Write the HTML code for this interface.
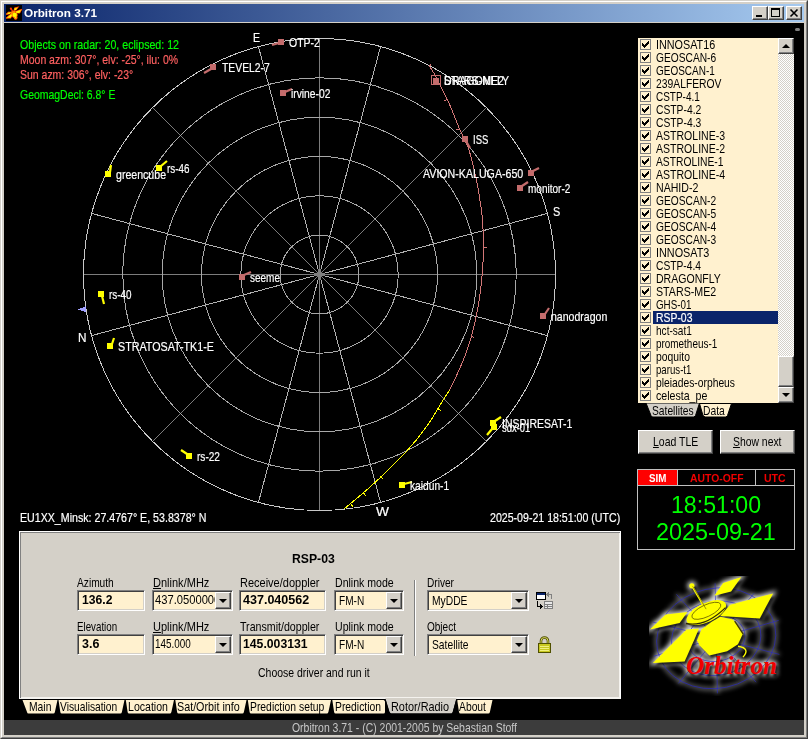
<!DOCTYPE html>
<html lang="en"><head><meta charset="utf-8"><title>Orbitron 3.71</title>
<style>
html,body{margin:0;padding:0}
body{width:808px;height:739px;overflow:hidden;background:#d4d0c8;font-family:"Liberation Sans",sans-serif;position:relative}
.abs,.t,svg.radar,svg.ic{position:absolute}
.t{white-space:nowrap;transform-origin:0 0;font-weight:400}
.t.b{font-weight:700}
.t.k{-webkit-text-stroke:0.2px}
.t u{text-decoration:underline;text-underline-offset:1px}
#win{left:0;top:0;width:808px;height:739px;box-sizing:border-box;border:1px solid;border-color:#d4d0c8 #404040 #404040 #d4d0c8}
#win2{left:1px;top:1px;width:806px;height:737px;box-sizing:border-box;border:1px solid;border-color:#fff #808080 #808080 #fff}
#title{left:4px;top:4px;width:800px;height:18px;background:linear-gradient(90deg,#0a246a 0%,#a6caf0 100%)}
#client{left:4px;top:23px;width:800px;height:697px;background:#000}
#status{left:4px;top:720px;width:800px;height:15px;background:#3c3c3c}
.btn{box-sizing:border-box;background:#d4d0c8;border:1px solid;border-color:#fff #404040 #404040 #fff;box-shadow:inset -1px -1px 0 #808080,inset 1px 1px 0 #d4d0c8}
.sunk{box-sizing:border-box;background:#fff1cf;border:1px solid;border-color:#808080 #fff #fff #808080;box-shadow:inset 1px 1px 0 #404040,inset -1px -1px 0 #d4d0c8}
#panel{left:19px;top:531px;width:602px;height:168px;box-sizing:border-box;background:#d4d0c8;border:1px solid;border-color:#fff #fff #f4f2ee #fff;box-shadow:inset 1px 1px 0 #808080,inset -1px -1px 0 #f4f2ee}
#list{left:638px;top:38px;width:156px;height:365px;background:#fff1cf}
.cb{width:11px;height:11px;box-sizing:border-box;border:1px solid #808080;background:#fff1cf}
.track{background-image:conic-gradient(#fff 25%,#d4d0c8 0 50%,#fff 0 75%,#d4d0c8 0);background-size:2px 2px}
.arr{width:0;height:0;border-left:4px solid transparent;border-right:4px solid transparent}
</style></head><body>
<div class="abs" id="win"></div><div class="abs" id="win2"></div>
<div class="abs" id="title"></div>
<div class="abs" id="client"></div>
<div class="abs" id="status"></div>
<svg class="radar" width="808" height="739" viewBox="0 0 808 739" shape-rendering="crispEdges">
<line x1="91.5" y1="213.4" x2="547.5" y2="335.6" stroke="#b2b2b2"/>
<line x1="258.4" y1="46.5" x2="380.6" y2="502.5" stroke="#b2b2b2"/>
<line x1="380.6" y1="46.5" x2="258.4" y2="502.5" stroke="#b2b2b2"/>
<line x1="547.5" y1="213.4" x2="91.5" y2="335.6" stroke="#b2b2b2"/>
<line x1="83.5" y1="274.5" x2="555.5" y2="274.5" stroke="#7c7c7c"/>
<line x1="152.6" y1="107.6" x2="486.4" y2="441.4" stroke="#7c7c7c"/>
<line x1="319.5" y1="38.5" x2="319.5" y2="510.5" stroke="#7c7c7c"/>
<line x1="486.4" y1="107.6" x2="152.6" y2="441.4" stroke="#7c7c7c"/>
<circle cx="319.5" cy="274.5" r="39.3" fill="none" stroke="#a8a8a8"/>
<circle cx="319.5" cy="274.5" r="78.7" fill="none" stroke="#a8a8a8"/>
<circle cx="319.5" cy="274.5" r="118.0" fill="none" stroke="#a8a8a8"/>
<circle cx="319.5" cy="274.5" r="157.3" fill="none" stroke="#a8a8a8"/>
<circle cx="319.5" cy="274.5" r="196.7" fill="none" stroke="#a8a8a8"/>
<circle cx="319.5" cy="274.5" r="236.0" fill="none" stroke="#c8c8c8"/>
<rect x="314" y="273" width="11" height="3" fill="#808080"/><rect x="318" y="269" width="3" height="11" fill="#808080"/>
<path d="M429.1,65.7 C430.1,67.3 433.3,71.9 435.2,75.2 C437.1,78.5 438.3,81.3 440.3,85.4 C442.3,89.5 445.2,94.9 447.4,99.6 C449.6,104.3 451.5,108.9 453.5,113.8 C455.5,118.7 457.9,125.1 459.6,129 C461.3,132.9 462.1,133.6 463.6,137 C465.1,140.4 467.1,144.4 468.7,149.2 C470.3,153.9 471.7,159.8 473.1,165.5 C474.5,171.2 476.0,177.6 477.2,183.7 C478.4,189.8 479.4,196.6 480.2,202 C481.0,207.4 481.7,211.1 482.2,216.2 C482.7,221.3 483.0,227.2 483.2,232.4 C483.4,237.6 483.5,242.3 483.5,247.3 C483.5,252.3 483.2,257.7 483,262.2 C482.8,266.7 482.7,268.9 482.2,274.3 C481.7,279.7 480.9,288.1 480,294.6 C479.1,301.1 478.2,306.5 476.8,313.5 C475.4,320.5 473.4,329.3 471.4,336.5 C469.4,343.7 467.1,350.3 464.6,356.8 C462.1,363.3 459.0,370.2 456.5,375.7 C454.0,381.2 450.7,387.6 449.5,390" fill="none" stroke="#d27676"/>
<path d="M449.5,390 C448.4,391.8 446.4,394.9 442.6,401 C438.8,407.1 432.7,418.1 426.5,426.7 C420.3,435.3 413.7,443.6 405.6,452.4 C397.5,461.2 385.3,472.8 378,479.7 C370.7,486.6 367.6,489.2 362,494 C356.4,498.8 347.4,506.2 344.5,508.7" fill="none" stroke="#ffff00"/>
<line x1="429.5" y1="65.5" x2="431.5" y2="64.5" stroke="#d27676"/>
<line x1="447.4" y1="99.6" x2="444.4" y2="100.6" stroke="#d27676"/>
<line x1="459.6" y1="129" x2="456.6" y2="130" stroke="#d27676"/>
<line x1="483.5" y1="247.3" x2="486.5" y2="247.3" stroke="#d27676"/>
<line x1="471.4" y1="336.5" x2="474.4" y2="337.5" stroke="#d27676"/>
<line x1="437.8" y1="409" x2="440.8" y2="410.5" stroke="#ffff00"/>
<line x1="379.9" y1="476.5" x2="382.9" y2="478.5" stroke="#ffff00"/>
<line x1="363.8" y1="493.3" x2="365.8" y2="496.3" stroke="#ffff00"/>
<line x1="351" y1="503.9" x2="353" y2="506.9" stroke="#ffff00"/>
<rect x="278" y="39" width="6" height="6" fill="#c46c6c"/><line x1="279" y1="43" x2="272" y2="45" stroke="#c46c6c" stroke-width="2.2" shape-rendering="geometricPrecision"/>
<rect x="210" y="64" width="6" height="6" fill="#c46c6c"/><line x1="211" y1="69" x2="204" y2="73" stroke="#c46c6c" stroke-width="2.2" shape-rendering="geometricPrecision"/>
<rect x="280" y="90" width="6" height="6" fill="#c46c6c"/><line x1="285" y1="92" x2="292" y2="89" stroke="#c46c6c" stroke-width="2.2" shape-rendering="geometricPrecision"/>
<rect x="105" y="171" width="6" height="6" fill="#ffff00"/><line x1="110" y1="172" x2="111" y2="165" stroke="#ffff00" stroke-width="2.2" shape-rendering="geometricPrecision"/>
<rect x="156" y="165" width="6" height="6" fill="#ffff00"/><line x1="161" y1="166" x2="167" y2="161" stroke="#ffff00" stroke-width="2.2" shape-rendering="geometricPrecision"/>
<rect x="98" y="291" width="6" height="6" fill="#ffff00"/><line x1="102" y1="296" x2="104" y2="304" stroke="#ffff00" stroke-width="2.2" shape-rendering="geometricPrecision"/>
<rect x="107" y="343" width="6" height="6" fill="#ffff00"/><line x1="112" y1="344" x2="114" y2="338" stroke="#ffff00" stroke-width="2.2" shape-rendering="geometricPrecision"/>
<rect x="239" y="274" width="6" height="6" fill="#c46c6c"/><line x1="244" y1="275" x2="251" y2="272" stroke="#c46c6c" stroke-width="2.2" shape-rendering="geometricPrecision"/>
<rect x="462" y="136" width="6" height="6" fill="#c46c6c"/><line x1="466" y1="141" x2="470" y2="148" stroke="#c46c6c" stroke-width="2.2" shape-rendering="geometricPrecision"/>
<rect x="528" y="170" width="6" height="6" fill="#c46c6c"/><line x1="533" y1="171" x2="539" y2="168" stroke="#c46c6c" stroke-width="2.2" shape-rendering="geometricPrecision"/>
<rect x="517" y="185" width="6" height="6" fill="#c46c6c"/><line x1="522" y1="186" x2="528" y2="182" stroke="#c46c6c" stroke-width="2.2" shape-rendering="geometricPrecision"/>
<rect x="540" y="313" width="6" height="6" fill="#c46c6c"/><line x1="545" y1="314" x2="549" y2="308" stroke="#c46c6c" stroke-width="2.2" shape-rendering="geometricPrecision"/>
<rect x="490" y="420" width="6" height="6" fill="#ffff00"/><line x1="495" y1="421" x2="501" y2="417" stroke="#ffff00" stroke-width="2.2" shape-rendering="geometricPrecision"/>
<rect x="491" y="424" width="6" height="6" fill="#ffff00"/><line x1="492" y1="429" x2="487" y2="435" stroke="#ffff00" stroke-width="2.2" shape-rendering="geometricPrecision"/>
<rect x="399" y="482" width="6" height="6" fill="#ffff00"/><line x1="404" y1="484" x2="412" y2="482" stroke="#ffff00" stroke-width="2.2" shape-rendering="geometricPrecision"/>
<rect x="186" y="453" width="6" height="6" fill="#ffff00"/><line x1="187" y1="454" x2="181" y2="450" stroke="#ffff00" stroke-width="2.2" shape-rendering="geometricPrecision"/>
<rect x="431.5" y="75.5" width="9" height="9" fill="none" stroke="#c46c6c"/><rect x="433" y="78" width="6" height="6" fill="#c46c6c"/>
<path d="M78,309.5 L86,306 L86,312 Z" fill="#a0a0ff"/>
</svg>
<div class="abs" style="left:6px;top:5px;width:16px;height:16px;background:#000"></div>
<svg class="ic" style="left:6px;top:5px" width="16" height="16" viewBox="0 -0.6 16 16"><defs><filter id="ib"><feGaussianBlur stdDeviation="0.45"/></filter></defs><g filter="url(#ib)"><g fill="#ff3000" stroke="#ff3000" stroke-width="1.3"><polygon points="8.7,2.6 11.7,1.8 9.8,4.2 8.4,4.4"/><polygon points="9.8,6.1 15.3,4.1 13.6,7.2 10.6,7"/><polygon points="0.3,8.6 2.5,6.7 4.6,6.8 3.3,8.1"/><polygon points="0.5,12.4 4.6,8.9 5.9,9.1 4.6,12.2"/><circle cx="8.7" cy="9.4" r="2.3"/><circle cx="9.6" cy="12.2" r="1.3"/><ellipse cx="6.9" cy="6.9" rx="2.2" ry="1.1" transform="rotate(-25 6.9 6.9)"/><path d="M4.9,3 L6.8,5.8" fill="none" stroke-width="1.4"/><circle cx="4.9" cy="3" r="0.5"/></g></g><g filter="url(#ib)"><g fill="#ff9000" stroke="#ff9000" stroke-width="0.5"><polygon points="8.7,2.6 11.7,1.8 9.8,4.2 8.4,4.4"/><polygon points="9.8,6.1 15.3,4.1 13.6,7.2 10.6,7"/><polygon points="0.3,8.6 2.5,6.7 4.6,6.8 3.3,8.1"/><polygon points="0.5,12.4 4.6,8.9 5.9,9.1 4.6,12.2"/><circle cx="8.7" cy="9.4" r="2.3"/><circle cx="9.6" cy="12.2" r="1.3"/><ellipse cx="6.9" cy="6.9" rx="2.2" ry="1.1" transform="rotate(-25 6.9 6.9)"/></g></g><g fill="#ffff00" transform="translate(0.6,0.6) scale(0.93)"><polygon points="8.7,2.6 11.7,1.8 9.8,4.2 8.4,4.4"/><polygon points="9.8,6.1 15.3,4.1 13.6,7.2 10.6,7"/><polygon points="0.3,8.6 2.5,6.7 4.6,6.8 3.3,8.1"/><polygon points="0.5,12.4 4.6,8.9 5.9,9.1 4.6,12.2"/><circle cx="8.7" cy="9.4" r="2.3"/><circle cx="9.6" cy="12.2" r="0.7"/></g></svg>
<span class="t b" style="left:24.20px;top:8.3px;font-size:11.5px;line-height:11.5px;color:#fff;transform:scaleX(1.021)">Orbitron 3.71</span>
<div class="abs btn" style="left:752px;top:6px;width:16px;height:14px"></div>
<div class="abs btn" style="left:768px;top:6px;width:16px;height:14px"></div>
<div class="abs btn" style="left:786px;top:6px;width:16px;height:14px"></div>
<div class="abs" style="left:756px;top:15px;width:6px;height:2px;background:#000"></div>
<div class="abs" style="left:771px;top:8px;width:9px;height:9px;box-sizing:border-box;border:1px solid #000;border-top-width:2px"></div>
<svg class="ic" style="left:786px;top:6px" width="16" height="14" viewBox="0 0 16 14"><path d="M4.5,3.5 L11.5,10.5 M11.5,3.5 L4.5,10.5" stroke="#000" stroke-width="1.6" fill="none"/></svg>
<div class="abs" style="left:795px;top:28px;width:5px;height:3px;background:#808080;border-radius:1.5px"></div>
<span class="t k" style="left:19.80px;top:38.0px;font-size:13px;line-height:13px;color:#00ff00;transform:scaleX(0.818)">Objects on radar: 20, eclipsed: 12</span>
<span class="t k" style="left:19.80px;top:53.0px;font-size:13px;line-height:13px;color:#ff6060;transform:scaleX(0.806)">Moon azm: 307°, elv: -25°, ilu: 0%</span>
<span class="t k" style="left:19.80px;top:68.0px;font-size:13px;line-height:13px;color:#ff6060;transform:scaleX(0.806)">Sun azm: 306°, elv: -23°</span>
<span class="t k" style="left:19.80px;top:88.0px;font-size:13px;line-height:13px;color:#00ff00;transform:scaleX(0.804)">GeomagDecl: 6.8° E</span>
<span class="t k" style="left:252.90px;top:31.0px;font-size:13px;line-height:13px;color:#fff;transform:scaleX(0.816)">E</span>
<span class="t k" style="left:77.80px;top:330.5px;font-size:13px;line-height:13px;color:#fff;transform:scaleX(0.904)">N</span>
<span class="t k" style="left:553.00px;top:205.0px;font-size:13px;line-height:13px;color:#fff;transform:scaleX(0.839)">S</span>
<span class="t k" style="left:376.40px;top:505.0px;font-size:13px;line-height:13px;color:#fff;transform:scaleX(1.057)">W</span>
<span class="t k" style="left:288.70px;top:36.0px;font-size:13px;line-height:13px;color:#fff;transform:scaleX(0.807)">OTP-2</span>
<span class="t k" style="left:221.50px;top:61.0px;font-size:13px;line-height:13px;color:#fff;transform:scaleX(0.797)">TEVEL2-7</span>
<span class="t k" style="left:290.60px;top:87.0px;font-size:13px;line-height:13px;color:#fff;transform:scaleX(0.790)">irvine-02</span>
<span class="t k" style="left:116.00px;top:168.0px;font-size:13px;line-height:13px;color:#fff;transform:scaleX(0.814)">greencube</span>
<span class="t k" style="left:167.00px;top:162.0px;font-size:13px;line-height:13px;color:#fff;transform:scaleX(0.760)">rs-46</span>
<span class="t k" style="left:109.00px;top:288.0px;font-size:13px;line-height:13px;color:#fff;transform:scaleX(0.760)">rs-40</span>
<span class="t k" style="left:118.40px;top:340.0px;font-size:13px;line-height:13px;color:#fff;transform:scaleX(0.825)">STRATOSAT-TK1-E</span>
<span class="t k" style="left:250.00px;top:271.0px;font-size:13px;line-height:13px;color:#fff;transform:scaleX(0.769)">seeme</span>
<span class="t k" style="left:444.00px;top:74.0px;font-size:13px;line-height:13px;color:#fff;transform:scaleX(0.814)">DRAGONFLY</span>
<span class="t k" style="left:444.00px;top:74.0px;font-size:13px;line-height:13px;color:#fff;transform:scaleX(0.817)">STARS-ME2</span>
<span class="t k" style="left:473.00px;top:133.0px;font-size:13px;line-height:13px;color:#fff;transform:scaleX(0.733)">ISS</span>
<span class="t k" style="left:423.30px;top:167.0px;font-size:13px;line-height:13px;color:#fff;transform:scaleX(0.818)">AVION-KALUGA-650</span>
<span class="t k" style="left:528.00px;top:182.0px;font-size:13px;line-height:13px;color:#fff;transform:scaleX(0.770)">monitor-2</span>
<span class="t k" style="left:550.70px;top:310.0px;font-size:13px;line-height:13px;color:#fff;transform:scaleX(0.811)">nanodragon</span>
<span class="t k" style="left:501.50px;top:417.0px;font-size:13px;line-height:13px;color:#fff;transform:scaleX(0.808)">INSPIRESAT-1</span>
<span class="t k" style="left:502.40px;top:421.0px;font-size:13px;line-height:13px;color:#fff;transform:scaleX(0.723)">sdx-01</span>
<span class="t k" style="left:410.00px;top:479.0px;font-size:13px;line-height:13px;color:#fff;transform:scaleX(0.786)">kaidun-1</span>
<span class="t k" style="left:196.80px;top:450.0px;font-size:13px;line-height:13px;color:#fff;transform:scaleX(0.774)">rs-22</span>
<span class="t k" style="left:19.50px;top:511.0px;font-size:13px;line-height:13px;color:#fff;transform:scaleX(0.818)">EU1XX_Minsk: 27.4767° E, 53.8378° N</span>
<span class="t k" style="left:489.60px;top:511.0px;font-size:13px;line-height:13px;color:#fff;transform:scaleX(0.815)">2025-09-21 18:51:00 (UTC)</span>
<div class="abs" id="panel"></div>
<span class="t b" style="left:291.70px;top:552.0px;font-size:13px;line-height:13px;color:#000;transform:scaleX(0.938)">RSP-03</span>
<span class="t" style="left:77.40px;top:576.0px;font-size:13px;line-height:13px;color:#000;transform:scaleX(0.783)">Azimuth</span>
<div class="abs sunk" style="left:77px;top:590px;width:68px;height:21px"></div>
<span class="t b" style="left:81.60px;top:593.0px;font-size:13px;line-height:13px;color:#000;transform:scaleX(0.935)">136.2</span>
<span class="t" style="left:152.50px;top:576.0px;font-size:13px;line-height:13px;color:#000;transform:scaleX(0.848)"><u>D</u>nlink/MHz</span>
<div class="abs sunk" style="left:152px;top:590px;width:81px;height:21px"></div>
<div class="abs btn" style="left:215px;top:592px;width:16px;height:17px"></div>
<div class="abs arr" style="left:219px;top:599px;border-top:4px solid #000"></div>
<span class="t" style="left:239.90px;top:576.0px;font-size:13px;line-height:13px;color:#000;transform:scaleX(0.846)">Receive/doppler</span>
<div class="abs sunk" style="left:239px;top:590px;width:87px;height:21px"></div>
<span class="t b" style="left:243.00px;top:593.0px;font-size:13px;line-height:13px;color:#000;transform:scaleX(0.964)">437.040562</span>
<span class="t" style="left:335.30px;top:576.0px;font-size:13px;line-height:13px;color:#000;transform:scaleX(0.813)">Dnlink mode</span>
<div class="abs sunk" style="left:334px;top:590px;width:70px;height:21px"></div>
<div class="abs btn" style="left:386px;top:592px;width:16px;height:17px"></div>
<div class="abs arr" style="left:390px;top:599px;border-top:4px solid #000"></div>
<span class="t" style="left:339.30px;top:593.5px;font-size:13px;line-height:13px;color:#000;transform:scaleX(0.775)">FM-N</span>
<span class="t" style="left:427.00px;top:576.0px;font-size:13px;line-height:13px;color:#000;transform:scaleX(0.778)">Driver</span>
<div class="abs sunk" style="left:427px;top:590px;width:102px;height:21px"></div>
<div class="abs btn" style="left:511px;top:592px;width:16px;height:17px"></div>
<div class="abs arr" style="left:515px;top:599px;border-top:4px solid #000"></div>
<span class="t" style="left:431.50px;top:593.5px;font-size:13px;line-height:13px;color:#000;transform:scaleX(0.792)">MyDDE</span>
<span class="t" style="left:77.40px;top:620.0px;font-size:13px;line-height:13px;color:#000;transform:scaleX(0.750)">Elevation</span>
<div class="abs sunk" style="left:77px;top:634px;width:68px;height:21px"></div>
<span class="t b" style="left:81.60px;top:637.0px;font-size:13px;line-height:13px;color:#000;transform:scaleX(0.961)">3.6</span>
<span class="t" style="left:152.50px;top:620.0px;font-size:13px;line-height:13px;color:#000;transform:scaleX(0.848)"><u>U</u>plink/MHz</span>
<div class="abs sunk" style="left:152px;top:634px;width:81px;height:21px"></div>
<div class="abs btn" style="left:215px;top:636px;width:16px;height:17px"></div>
<div class="abs arr" style="left:219px;top:643px;border-top:4px solid #000"></div>
<span class="t" style="left:155.20px;top:637.0px;font-size:13px;line-height:13px;color:#000;transform:scaleX(0.762)">145.000</span>
<span class="t" style="left:239.90px;top:620.0px;font-size:13px;line-height:13px;color:#000;transform:scaleX(0.818)">Transmit/doppler</span>
<div class="abs sunk" style="left:239px;top:634px;width:87px;height:21px"></div>
<span class="t b" style="left:243.00px;top:637.0px;font-size:13px;line-height:13px;color:#000;transform:scaleX(0.940)">145.003131</span>
<span class="t" style="left:335.30px;top:620.0px;font-size:13px;line-height:13px;color:#000;transform:scaleX(0.813)">Uplink mode</span>
<div class="abs sunk" style="left:334px;top:634px;width:70px;height:21px"></div>
<div class="abs btn" style="left:386px;top:636px;width:16px;height:17px"></div>
<div class="abs arr" style="left:390px;top:643px;border-top:4px solid #000"></div>
<span class="t" style="left:339.30px;top:637.5px;font-size:13px;line-height:13px;color:#000;transform:scaleX(0.775)">FM-N</span>
<span class="t" style="left:427.00px;top:620.0px;font-size:13px;line-height:13px;color:#000;transform:scaleX(0.771)">Object</span>
<div class="abs sunk" style="left:427px;top:634px;width:102px;height:21px"></div>
<div class="abs btn" style="left:511px;top:636px;width:16px;height:17px"></div>
<div class="abs arr" style="left:515px;top:643px;border-top:4px solid #000"></div>
<span class="t" style="left:431.50px;top:637.5px;font-size:13px;line-height:13px;color:#000;transform:scaleX(0.790)">Satellite</span>
<div class="abs" style="left:154px;top:592px;width:61px;height:17px;overflow:hidden">
<span class="t" style="left:1.20px;top:1.0px;font-size:13px;line-height:13px;color:#000;transform:scaleX(0.860)">437.0500000</span>
</div>
<span class="t" style="left:257.50px;top:666.0px;font-size:13px;line-height:13px;color:#000;transform:scaleX(0.805)">Choose driver and run it</span>
<div class="abs" style="left:414px;top:580px;width:1px;height:76px;background:#808080"></div><div class="abs" style="left:415px;top:580px;width:1px;height:76px;background:#fff"></div>
<svg class="ic" style="left:535px;top:591px" width="18" height="18" viewBox="0 0 18 18" shape-rendering="crispEdges">
<rect x="1.5" y="1.5" width="9" height="7" fill="#fff" stroke="#000"/><rect x="2" y="2" width="8" height="2" fill="#0a246a"/>
<path d="M2.5,10 V15.5 H6" fill="none" stroke="#000"/><path d="M5,13 L8,15.5 L5,18 Z" fill="#000"/>
<path d="M16.5,8 V3.5 H13" fill="none" stroke="#808080"/><path d="M14,1 L11,3.5 L14,6 Z" fill="#808080"/>
<rect x="9.5" y="10.5" width="8" height="7" fill="#e8e8e8" stroke="#808080"/><path d="M9.5,13.5 H17.5 M9.5,15.5 H17.5 M12.5,12.5 V17.5" stroke="#808080" fill="none"/>
</svg>
<svg class="ic" style="left:537px;top:636px" width="15" height="17" viewBox="0 0 15 17">
<path d="M4,8 V5 A3.5,3.5 0 0 1 11,5 V8" fill="none" stroke="#505000" stroke-width="2.6"/>
<path d="M4,8 V5 A3.5,3.5 0 0 1 11,5 V8" fill="none" stroke="#d8d860" stroke-width="1"/>
<rect x="1.5" y="7.5" width="12" height="9" fill="#c8c820" stroke="#505000"/>
<path d="M3,10.5 H12 M3,12.5 H12 M3,14.5 H12" stroke="#f0f080" fill="none"/>
</svg>
<svg class="ic" style="left:0;top:696px" width="808" height="20" viewBox="0 696 808 20">
<path d="M22.5,700 L57.5,700 L54.9,712 Q54.6,713.5 53.3,713.5 L28.5,713.5 Q27.2,713.5 27.0,712 Z" fill="#fff1cf"/>
<path d="M58.5,700 L124.5,700 L121.9,712 Q121.6,713.5 120.3,713.5 L61.8,713.5 Q60.5,713.5 60.3,712 Z" fill="#fff1cf"/>
<path d="M125.8,700 L174,700 L171.4,712 Q171.1,713.5 169.8,713.5 L129.1,713.5 Q127.8,713.5 127.6,712 Z" fill="#fff1cf"/>
<path d="M175.3,700 L246.5,700 L243.9,712 Q243.6,713.5 242.3,713.5 L178.60000000000002,713.5 Q177.3,713.5 177.10000000000002,712 Z" fill="#fff1cf"/>
<path d="M247.8,700 L331,700 L328.4,712 Q328.1,713.5 326.8,713.5 L251.10000000000002,713.5 Q249.8,713.5 249.60000000000002,712 Z" fill="#fff1cf"/>
<path d="M332.3,700 L383.5,700 Q385,700 385,701.5 L385,712 Q385,713.5 383.5,713.5 L335.6,713.5 Q334.3,713.5 334.1,712 Z" fill="#fff1cf"/>
<path d="M457.2,700 L492.5,700 L489.9,712 Q489.6,713.5 488.3,713.5 L460.5,713.5 Q459.2,713.5 459.0,712 Z" fill="#fff1cf"/>
<path d="M385.3,698 L456.5,698 L452.8,712 L451.5,713.5 L390.8,713.5 L389.40000000000003,712 Z" fill="#d4d0c8"/>
<path d="M385.0,699.5 L389.0,712.5 L390.3,714 L452,714 L453.2,712.5 L456.8,699.5" fill="none" stroke="#000" stroke-width="1.2"/>
</svg>
<span class="t" style="left:28.70px;top:700.0px;font-size:13px;line-height:13px;color:#000;transform:scaleX(0.794)">Main</span>
<span class="t" style="left:60.30px;top:700.0px;font-size:13px;line-height:13px;color:#000;transform:scaleX(0.787)">Visualisation</span>
<span class="t" style="left:128.00px;top:700.0px;font-size:13px;line-height:13px;color:#000;transform:scaleX(0.813)">Location</span>
<span class="t" style="left:177.20px;top:700.0px;font-size:13px;line-height:13px;color:#000;transform:scaleX(0.827)">Sat/Orbit info</span>
<span class="t" style="left:250.20px;top:700.0px;font-size:13px;line-height:13px;color:#000;transform:scaleX(0.797)">Prediction setup</span>
<span class="t" style="left:335.00px;top:700.0px;font-size:13px;line-height:13px;color:#000;transform:scaleX(0.796)">Prediction</span>
<span class="t" style="left:390.80px;top:700.0px;font-size:13px;line-height:13px;color:#000;transform:scaleX(0.837)">Rotor/Radio</span>
<span class="t" style="left:459.00px;top:700.0px;font-size:13px;line-height:13px;color:#000;transform:scaleX(0.794)">About</span>
<span class="t" style="left:291.80px;top:721.0px;font-size:13px;line-height:13px;color:#c8c8c8;transform:scaleX(0.803)">Orbitron 3.71 - (C) 2001-2005 by Sebastian Stoff</span>
<div class="abs" id="list"></div>
<div class="abs" style="left:653px;top:311px;width:125px;height:13px;background:#0a246a"></div>
<div class="abs cb" style="left:640px;top:39px"></div><svg class="ic" style="left:640px;top:39px" width="11" height="11" viewBox="0 0 11 11"><path d="M2,4h1v3h-1zM3,5h1v3h-1zM4,6h1v3h-1zM5,5h1v3h-1zM6,4h1v3h-1zM7,3h1v3h-1zM8,2h1v3h-1z" fill="#000" shape-rendering="crispEdges"/></svg>
<span class="t" style="left:656.00px;top:38.0px;font-size:13px;line-height:13px;color:#000;transform:scaleX(0.830)">INNOSAT16</span>
<div class="abs cb" style="left:640px;top:52px"></div><svg class="ic" style="left:640px;top:52px" width="11" height="11" viewBox="0 0 11 11"><path d="M2,4h1v3h-1zM3,5h1v3h-1zM4,6h1v3h-1zM5,5h1v3h-1zM6,4h1v3h-1zM7,3h1v3h-1zM8,2h1v3h-1z" fill="#000" shape-rendering="crispEdges"/></svg>
<span class="t" style="left:656.00px;top:51.0px;font-size:13px;line-height:13px;color:#000;transform:scaleX(0.786)">GEOSCAN-6</span>
<div class="abs cb" style="left:640px;top:65px"></div><svg class="ic" style="left:640px;top:65px" width="11" height="11" viewBox="0 0 11 11"><path d="M2,4h1v3h-1zM3,5h1v3h-1zM4,6h1v3h-1zM5,5h1v3h-1zM6,4h1v3h-1zM7,3h1v3h-1zM8,2h1v3h-1z" fill="#000" shape-rendering="crispEdges"/></svg>
<span class="t" style="left:656.00px;top:64.0px;font-size:13px;line-height:13px;color:#000;transform:scaleX(0.768)">GEOSCAN-1</span>
<div class="abs cb" style="left:640px;top:78px"></div><svg class="ic" style="left:640px;top:78px" width="11" height="11" viewBox="0 0 11 11"><path d="M2,4h1v3h-1zM3,5h1v3h-1zM4,6h1v3h-1zM5,5h1v3h-1zM6,4h1v3h-1zM7,3h1v3h-1zM8,2h1v3h-1z" fill="#000" shape-rendering="crispEdges"/></svg>
<span class="t" style="left:656.00px;top:77.0px;font-size:13px;line-height:13px;color:#000;transform:scaleX(0.795)">239ALFEROV</span>
<div class="abs cb" style="left:640px;top:91px"></div><svg class="ic" style="left:640px;top:91px" width="11" height="11" viewBox="0 0 11 11"><path d="M2,4h1v3h-1zM3,5h1v3h-1zM4,6h1v3h-1zM5,5h1v3h-1zM6,4h1v3h-1zM7,3h1v3h-1zM8,2h1v3h-1z" fill="#000" shape-rendering="crispEdges"/></svg>
<span class="t" style="left:656.00px;top:90.0px;font-size:13px;line-height:13px;color:#000;transform:scaleX(0.767)">CSTP-4.1</span>
<div class="abs cb" style="left:640px;top:104px"></div><svg class="ic" style="left:640px;top:104px" width="11" height="11" viewBox="0 0 11 11"><path d="M2,4h1v3h-1zM3,5h1v3h-1zM4,6h1v3h-1zM5,5h1v3h-1zM6,4h1v3h-1zM7,3h1v3h-1zM8,2h1v3h-1z" fill="#000" shape-rendering="crispEdges"/></svg>
<span class="t" style="left:656.00px;top:103.0px;font-size:13px;line-height:13px;color:#000;transform:scaleX(0.793)">CSTP-4.2</span>
<div class="abs cb" style="left:640px;top:117px"></div><svg class="ic" style="left:640px;top:117px" width="11" height="11" viewBox="0 0 11 11"><path d="M2,4h1v3h-1zM3,5h1v3h-1zM4,6h1v3h-1zM5,5h1v3h-1zM6,4h1v3h-1zM7,3h1v3h-1zM8,2h1v3h-1z" fill="#000" shape-rendering="crispEdges"/></svg>
<span class="t" style="left:656.00px;top:116.0px;font-size:13px;line-height:13px;color:#000;transform:scaleX(0.793)">CSTP-4.3</span>
<div class="abs cb" style="left:640px;top:130px"></div><svg class="ic" style="left:640px;top:130px" width="11" height="11" viewBox="0 0 11 11"><path d="M2,4h1v3h-1zM3,5h1v3h-1zM4,6h1v3h-1zM5,5h1v3h-1zM6,4h1v3h-1zM7,3h1v3h-1zM8,2h1v3h-1z" fill="#000" shape-rendering="crispEdges"/></svg>
<span class="t" style="left:656.00px;top:129.0px;font-size:13px;line-height:13px;color:#000;transform:scaleX(0.811)">ASTROLINE-3</span>
<div class="abs cb" style="left:640px;top:143px"></div><svg class="ic" style="left:640px;top:143px" width="11" height="11" viewBox="0 0 11 11"><path d="M2,4h1v3h-1zM3,5h1v3h-1zM4,6h1v3h-1zM5,5h1v3h-1zM6,4h1v3h-1zM7,3h1v3h-1zM8,2h1v3h-1z" fill="#000" shape-rendering="crispEdges"/></svg>
<span class="t" style="left:656.00px;top:142.0px;font-size:13px;line-height:13px;color:#000;transform:scaleX(0.811)">ASTROLINE-2</span>
<div class="abs cb" style="left:640px;top:156px"></div><svg class="ic" style="left:640px;top:156px" width="11" height="11" viewBox="0 0 11 11"><path d="M2,4h1v3h-1zM3,5h1v3h-1zM4,6h1v3h-1zM5,5h1v3h-1zM6,4h1v3h-1zM7,3h1v3h-1zM8,2h1v3h-1z" fill="#000" shape-rendering="crispEdges"/></svg>
<span class="t" style="left:656.00px;top:155.0px;font-size:13px;line-height:13px;color:#000;transform:scaleX(0.792)">ASTROLINE-1</span>
<div class="abs cb" style="left:640px;top:169px"></div><svg class="ic" style="left:640px;top:169px" width="11" height="11" viewBox="0 0 11 11"><path d="M2,4h1v3h-1zM3,5h1v3h-1zM4,6h1v3h-1zM5,5h1v3h-1zM6,4h1v3h-1zM7,3h1v3h-1zM8,2h1v3h-1z" fill="#000" shape-rendering="crispEdges"/></svg>
<span class="t" style="left:656.00px;top:168.0px;font-size:13px;line-height:13px;color:#000;transform:scaleX(0.811)">ASTROLINE-4</span>
<div class="abs cb" style="left:640px;top:182px"></div><svg class="ic" style="left:640px;top:182px" width="11" height="11" viewBox="0 0 11 11"><path d="M2,4h1v3h-1zM3,5h1v3h-1zM4,6h1v3h-1zM5,5h1v3h-1zM6,4h1v3h-1zM7,3h1v3h-1zM8,2h1v3h-1z" fill="#000" shape-rendering="crispEdges"/></svg>
<span class="t" style="left:656.00px;top:181.0px;font-size:13px;line-height:13px;color:#000;transform:scaleX(0.815)">NAHID-2</span>
<div class="abs cb" style="left:640px;top:195px"></div><svg class="ic" style="left:640px;top:195px" width="11" height="11" viewBox="0 0 11 11"><path d="M2,4h1v3h-1zM3,5h1v3h-1zM4,6h1v3h-1zM5,5h1v3h-1zM6,4h1v3h-1zM7,3h1v3h-1zM8,2h1v3h-1z" fill="#000" shape-rendering="crispEdges"/></svg>
<span class="t" style="left:656.00px;top:194.0px;font-size:13px;line-height:13px;color:#000;transform:scaleX(0.786)">GEOSCAN-2</span>
<div class="abs cb" style="left:640px;top:208px"></div><svg class="ic" style="left:640px;top:208px" width="11" height="11" viewBox="0 0 11 11"><path d="M2,4h1v3h-1zM3,5h1v3h-1zM4,6h1v3h-1zM5,5h1v3h-1zM6,4h1v3h-1zM7,3h1v3h-1zM8,2h1v3h-1z" fill="#000" shape-rendering="crispEdges"/></svg>
<span class="t" style="left:656.00px;top:207.0px;font-size:13px;line-height:13px;color:#000;transform:scaleX(0.786)">GEOSCAN-5</span>
<div class="abs cb" style="left:640px;top:221px"></div><svg class="ic" style="left:640px;top:221px" width="11" height="11" viewBox="0 0 11 11"><path d="M2,4h1v3h-1zM3,5h1v3h-1zM4,6h1v3h-1zM5,5h1v3h-1zM6,4h1v3h-1zM7,3h1v3h-1zM8,2h1v3h-1z" fill="#000" shape-rendering="crispEdges"/></svg>
<span class="t" style="left:656.00px;top:220.0px;font-size:13px;line-height:13px;color:#000;transform:scaleX(0.786)">GEOSCAN-4</span>
<div class="abs cb" style="left:640px;top:234px"></div><svg class="ic" style="left:640px;top:234px" width="11" height="11" viewBox="0 0 11 11"><path d="M2,4h1v3h-1zM3,5h1v3h-1zM4,6h1v3h-1zM5,5h1v3h-1zM6,4h1v3h-1zM7,3h1v3h-1zM8,2h1v3h-1z" fill="#000" shape-rendering="crispEdges"/></svg>
<span class="t" style="left:656.00px;top:233.0px;font-size:13px;line-height:13px;color:#000;transform:scaleX(0.786)">GEOSCAN-3</span>
<div class="abs cb" style="left:640px;top:247px"></div><svg class="ic" style="left:640px;top:247px" width="11" height="11" viewBox="0 0 11 11"><path d="M2,4h1v3h-1zM3,5h1v3h-1zM4,6h1v3h-1zM5,5h1v3h-1zM6,4h1v3h-1zM7,3h1v3h-1zM8,2h1v3h-1z" fill="#000" shape-rendering="crispEdges"/></svg>
<span class="t" style="left:656.00px;top:246.0px;font-size:13px;line-height:13px;color:#000;transform:scaleX(0.833)">INNOSAT3</span>
<div class="abs cb" style="left:640px;top:260px"></div><svg class="ic" style="left:640px;top:260px" width="11" height="11" viewBox="0 0 11 11"><path d="M2,4h1v3h-1zM3,5h1v3h-1zM4,6h1v3h-1zM5,5h1v3h-1zM6,4h1v3h-1zM7,3h1v3h-1zM8,2h1v3h-1z" fill="#000" shape-rendering="crispEdges"/></svg>
<span class="t" style="left:656.00px;top:259.0px;font-size:13px;line-height:13px;color:#000;transform:scaleX(0.788)">CSTP-4.4</span>
<div class="abs cb" style="left:640px;top:273px"></div><svg class="ic" style="left:640px;top:273px" width="11" height="11" viewBox="0 0 11 11"><path d="M2,4h1v3h-1zM3,5h1v3h-1zM4,6h1v3h-1zM5,5h1v3h-1zM6,4h1v3h-1zM7,3h1v3h-1zM8,2h1v3h-1z" fill="#000" shape-rendering="crispEdges"/></svg>
<span class="t" style="left:656.00px;top:272.0px;font-size:13px;line-height:13px;color:#000;transform:scaleX(0.811)">DRAGONFLY</span>
<div class="abs cb" style="left:640px;top:286px"></div><svg class="ic" style="left:640px;top:286px" width="11" height="11" viewBox="0 0 11 11"><path d="M2,4h1v3h-1zM3,5h1v3h-1zM4,6h1v3h-1zM5,5h1v3h-1zM6,4h1v3h-1zM7,3h1v3h-1zM8,2h1v3h-1z" fill="#000" shape-rendering="crispEdges"/></svg>
<span class="t" style="left:656.00px;top:285.0px;font-size:13px;line-height:13px;color:#000;transform:scaleX(0.820)">STARS-ME2</span>
<div class="abs cb" style="left:640px;top:299px"></div><svg class="ic" style="left:640px;top:299px" width="11" height="11" viewBox="0 0 11 11"><path d="M2,4h1v3h-1zM3,5h1v3h-1zM4,6h1v3h-1zM5,5h1v3h-1zM6,4h1v3h-1zM7,3h1v3h-1zM8,2h1v3h-1z" fill="#000" shape-rendering="crispEdges"/></svg>
<span class="t" style="left:656.00px;top:298.0px;font-size:13px;line-height:13px;color:#000;transform:scaleX(0.753)">GHS-01</span>
<div class="abs cb" style="left:640px;top:312px"></div><svg class="ic" style="left:640px;top:312px" width="11" height="11" viewBox="0 0 11 11"><path d="M2,4h1v3h-1zM3,5h1v3h-1zM4,6h1v3h-1zM5,5h1v3h-1zM6,4h1v3h-1zM7,3h1v3h-1zM8,2h1v3h-1z" fill="#000" shape-rendering="crispEdges"/></svg>
<span class="t k" style="left:656.00px;top:311.0px;font-size:13px;line-height:13px;color:#fff;transform:scaleX(0.800)">RSP-03</span>
<div class="abs cb" style="left:640px;top:325px"></div><svg class="ic" style="left:640px;top:325px" width="11" height="11" viewBox="0 0 11 11"><path d="M2,4h1v3h-1zM3,5h1v3h-1zM4,6h1v3h-1zM5,5h1v3h-1zM6,4h1v3h-1zM7,3h1v3h-1zM8,2h1v3h-1z" fill="#000" shape-rendering="crispEdges"/></svg>
<span class="t" style="left:656.00px;top:324.0px;font-size:13px;line-height:13px;color:#000;transform:scaleX(0.775)">hct-sat1</span>
<div class="abs cb" style="left:640px;top:338px"></div><svg class="ic" style="left:640px;top:338px" width="11" height="11" viewBox="0 0 11 11"><path d="M2,4h1v3h-1zM3,5h1v3h-1zM4,6h1v3h-1zM5,5h1v3h-1zM6,4h1v3h-1zM7,3h1v3h-1zM8,2h1v3h-1z" fill="#000" shape-rendering="crispEdges"/></svg>
<span class="t" style="left:656.00px;top:337.0px;font-size:13px;line-height:13px;color:#000;transform:scaleX(0.763)">prometheus-1</span>
<div class="abs cb" style="left:640px;top:351px"></div><svg class="ic" style="left:640px;top:351px" width="11" height="11" viewBox="0 0 11 11"><path d="M2,4h1v3h-1zM3,5h1v3h-1zM4,6h1v3h-1zM5,5h1v3h-1zM6,4h1v3h-1zM7,3h1v3h-1zM8,2h1v3h-1z" fill="#000" shape-rendering="crispEdges"/></svg>
<span class="t" style="left:656.00px;top:350.0px;font-size:13px;line-height:13px;color:#000;transform:scaleX(0.796)">poquito</span>
<div class="abs cb" style="left:640px;top:364px"></div><svg class="ic" style="left:640px;top:364px" width="11" height="11" viewBox="0 0 11 11"><path d="M2,4h1v3h-1zM3,5h1v3h-1zM4,6h1v3h-1zM5,5h1v3h-1zM6,4h1v3h-1zM7,3h1v3h-1zM8,2h1v3h-1z" fill="#000" shape-rendering="crispEdges"/></svg>
<span class="t" style="left:656.00px;top:363.0px;font-size:13px;line-height:13px;color:#000;transform:scaleX(0.742)">parus-t1</span>
<div class="abs cb" style="left:640px;top:377px"></div><svg class="ic" style="left:640px;top:377px" width="11" height="11" viewBox="0 0 11 11"><path d="M2,4h1v3h-1zM3,5h1v3h-1zM4,6h1v3h-1zM5,5h1v3h-1zM6,4h1v3h-1zM7,3h1v3h-1zM8,2h1v3h-1z" fill="#000" shape-rendering="crispEdges"/></svg>
<span class="t" style="left:656.00px;top:376.0px;font-size:13px;line-height:13px;color:#000;transform:scaleX(0.792)">pleiades-orpheus</span>
<div class="abs cb" style="left:640px;top:390px"></div><svg class="ic" style="left:640px;top:390px" width="11" height="11" viewBox="0 0 11 11"><path d="M2,4h1v3h-1zM3,5h1v3h-1zM4,6h1v3h-1zM5,5h1v3h-1zM6,4h1v3h-1zM7,3h1v3h-1zM8,2h1v3h-1z" fill="#000" shape-rendering="crispEdges"/></svg>
<span class="t" style="left:656.00px;top:389.0px;font-size:13px;line-height:13px;color:#000;transform:scaleX(0.816)">celesta_pe</span>
<div class="abs track" style="left:778px;top:38px;width:16px;height:365px"></div>
<div class="abs btn" style="left:778px;top:38px;width:16px;height:16px"></div><div class="abs arr" style="left:782px;top:44px;border-bottom:4px solid #000"></div>
<div class="abs btn" style="left:778px;top:387px;width:16px;height:16px"></div><div class="abs arr" style="left:782px;top:393px;border-top:4px solid #000"></div>
<div class="abs btn" style="left:778px;top:356px;width:16px;height:31px"></div>
<svg class="ic" style="left:638px;top:403px" width="120" height="16" viewBox="638 403 120 16">
<path d="M699.5,403.5 L731.5,403.5 L727.5,415.5 L726,417 L705,417 L703,415.5 Z" fill="#fff1cf" stroke="#000"/>
<path d="M646,403 L699.5,403 L695.5,415.5 L694,417 L652.5,417 L651,415.5 Z" fill="#d4d0c8" stroke="#000"/>
</svg>
<span class="t" style="left:651.80px;top:404.0px;font-size:13px;line-height:13px;color:#000;transform:scaleX(0.789)">Satellites</span>
<span class="t" style="left:702.70px;top:404.0px;font-size:13px;line-height:13px;color:#000;transform:scaleX(0.793)">Data</span>
<div class="abs btn" style="left:638px;top:430px;width:75px;height:24px"></div>
<div class="abs btn" style="left:720px;top:430px;width:75px;height:24px"></div>
<span class="t" style="left:653.30px;top:435.0px;font-size:13px;line-height:13px;color:#000;transform:scaleX(0.807)"><u>L</u>oad TLE</span>
<span class="t" style="left:733.00px;top:435.0px;font-size:13px;line-height:13px;color:#000;transform:scaleX(0.799)"><u>S</u>how next</span>
<div class="abs" style="left:637px;top:469px;width:158px;height:81px;box-sizing:border-box;border:1px solid #c0c0c0;background:#000"></div>
<div class="abs" style="left:638px;top:470px;width:39px;height:15px;background:#ff0000"></div>
<div class="abs" style="left:638px;top:485px;width:156px;height:1px;background:#c0c0c0"></div>
<div class="abs" style="left:677px;top:470px;width:1px;height:15px;background:#c0c0c0"></div>
<div class="abs" style="left:755px;top:470px;width:1px;height:15px;background:#c0c0c0"></div>
<span class="t b" style="left:649.00px;top:472.7px;font-size:11px;line-height:11px;color:#fff;transform:scaleX(0.888)">SIM</span>
<span class="t b" style="left:689.50px;top:472.7px;font-size:11px;line-height:11px;color:#f00000;transform:scaleX(0.945)">AUTO-OFF</span>
<span class="t b" style="left:764.40px;top:472.7px;font-size:11px;line-height:11px;color:#f00000;transform:scaleX(0.956)">UTC</span>
<span class="t" style="left:671.30px;top:493.5px;font-size:23px;line-height:23px;color:#00ff00;transform:scaleX(1.006)">18:51:00</span>
<span class="t" style="left:655.50px;top:520.7px;font-size:23px;line-height:23px;color:#00ff00;transform:scaleX(1.018)">2025-09-21</span>
<svg class="ic" style="left:649px;top:576px" width="136" height="120" viewBox="649 576 136 120">
<defs><filter id="gl" x="-30%" y="-30%" width="160%" height="160%"><feGaussianBlur stdDeviation="2.6"/></filter><filter id="g2" x="-30%" y="-30%" width="160%" height="160%"><feGaussianBlur stdDeviation="1.3"/></filter></defs>
<g filter="url(#gl)" opacity="0.5"><g fill="none" stroke="#fff" stroke-width="3"><ellipse cx="716.2" cy="638.3" rx="60" ry="50" fill="none" transform="rotate(-12 716.2 638.3)"/><ellipse cx="716.2" cy="638.3" rx="45" ry="37" fill="none" transform="rotate(-12 716.2 638.3)"/><ellipse cx="716.2" cy="638.3" rx="29" ry="23" fill="none" transform="rotate(-12 716.2 638.3)"/><line x1="653.1" y1="622.2" x2="779.4" y2="654.4"/><line x1="676.5" y1="594.4" x2="756.0" y2="682.2"/><line x1="715.1" y1="583.3" x2="717.4" y2="693.3"/><line x1="754.1" y1="593.3" x2="678.4" y2="683.4"/><line x1="778.6" y1="620.4" x2="653.8" y2="656.2"/></g></g>
<g filter="url(#gl)" opacity="0.85"><g fill="#fff" stroke="#fff" stroke-width="4"><polygon points="723.2,582.9 741.4,576.9 731.1,591.4 714.3,595.7"/><polygon points="730.1,604.7 773.1,593.4 759.8,618.5 720.2,615.9"/><polygon points="649.9,629.4 665.7,614.6 687.5,612.0 679.6,623.1"/><polygon points="652.9,663.1 686.5,629.4 699.0,628.4 694.5,639.3 684.6,661.5"/><polygon points="701.4,629.4 711.3,621.9 720.2,616.7 733.1,619.5 743.0,633.4 738.0,644.3 727.1,651.2 709.3,655.5 699.4,645.2 697.0,640.3"/><ellipse cx="706.3" cy="612.6" rx="21.4" ry="9.5" transform="rotate(-25 706.3 612.6)"/><circle cx="691.9" cy="585.8" r="2.6"/></g><g fill="#fff" stroke="#fff" stroke-width="3"><text x="686" y="674" font-family="Liberation Serif, serif" font-weight="700" font-style="italic" font-size="25" textLength="91" lengthAdjust="spacingAndGlyphs">Orbitron</text></g></g>
<g fill="none" stroke="#2626c8" stroke-width="0.6"><ellipse cx="716.2" cy="638.3" rx="60" ry="50" fill="none" transform="rotate(-12 716.2 638.3)"/><ellipse cx="716.2" cy="638.3" rx="45" ry="37" fill="none" transform="rotate(-12 716.2 638.3)"/><ellipse cx="716.2" cy="638.3" rx="29" ry="23" fill="none" transform="rotate(-12 716.2 638.3)"/><line x1="653.1" y1="622.2" x2="779.4" y2="654.4"/><line x1="676.5" y1="594.4" x2="756.0" y2="682.2"/><line x1="715.1" y1="583.3" x2="717.4" y2="693.3"/><line x1="754.1" y1="593.3" x2="678.4" y2="683.4"/><line x1="778.6" y1="620.4" x2="653.8" y2="656.2"/></g>
<g filter="url(#g2)" fill="#000" opacity="0.8" transform="translate(2.2,2.5)"><polygon points="723.2,582.9 741.4,576.9 731.1,591.4 714.3,595.7"/><polygon points="730.1,604.7 773.1,593.4 759.8,618.5 720.2,615.9"/><polygon points="649.9,629.4 665.7,614.6 687.5,612.0 679.6,623.1"/><polygon points="652.9,663.1 686.5,629.4 699.0,628.4 694.5,639.3 684.6,661.5"/><polygon points="701.4,629.4 711.3,621.9 720.2,616.7 733.1,619.5 743.0,633.4 738.0,644.3 727.1,651.2 709.3,655.5 699.4,645.2 697.0,640.3"/><ellipse cx="706.3" cy="612.6" rx="21.4" ry="9.5" transform="rotate(-25 706.3 612.6)"/><circle cx="691.9" cy="585.8" r="2.6"/><text x="686" y="674" font-family="Liberation Serif, serif" font-weight="700" font-style="italic" font-size="25" textLength="91" lengthAdjust="spacingAndGlyphs">Orbitron</text></g>
<g fill="#ffff00"><polygon points="723.2,582.9 741.4,576.9 731.1,591.4 714.3,595.7"/><polygon points="730.1,604.7 773.1,593.4 759.8,618.5 720.2,615.9"/><polygon points="649.9,629.4 665.7,614.6 687.5,612.0 679.6,623.1"/><polygon points="652.9,663.1 686.5,629.4 699.0,628.4 694.5,639.3 684.6,661.5"/><polygon points="701.4,629.4 711.3,621.9 720.2,616.7 733.1,619.5 743.0,633.4 738.0,644.3 727.1,651.2 709.3,655.5 699.4,645.2 697.0,640.3"/><ellipse cx="706.3" cy="612.6" rx="21.4" ry="9.5" transform="rotate(-25 706.3 612.6)"/><circle cx="691.9" cy="585.8" r="2.6"/></g>
<line x1="691.9" y1="585.8" x2="705.3" y2="608.6" stroke="#ffff00" stroke-width="1.8"/>
<line x1="692.7" y1="586.3" x2="706.1" y2="609.1" stroke="#605000" stroke-width="0.6"/>
<ellipse cx="707.1" cy="611.0" rx="15.8" ry="5.9" transform="rotate(-25 706.3 612.6)" fill="none" stroke="#5a5000" stroke-width="0.7"/>
<path d="M685.9,623.5 Q705.3,627.4 725.5,607.6" fill="none" stroke="#302800" stroke-width="1.3"/>
<path d="M734.7,621.1 L743.0,633.8" fill="none" stroke="#403800" stroke-width="1.2"/>
<path d="M738.0,646.2 Q750.9,648.2 743.0,657.1" fill="none" stroke="#ffff00" stroke-width="1.4"/>
<g fill="#f00000"><text x="686" y="674" font-family="Liberation Serif, serif" font-weight="700" font-style="italic" font-size="25" textLength="91" lengthAdjust="spacingAndGlyphs">Orbitron</text></g>
</svg>
</body></html>
